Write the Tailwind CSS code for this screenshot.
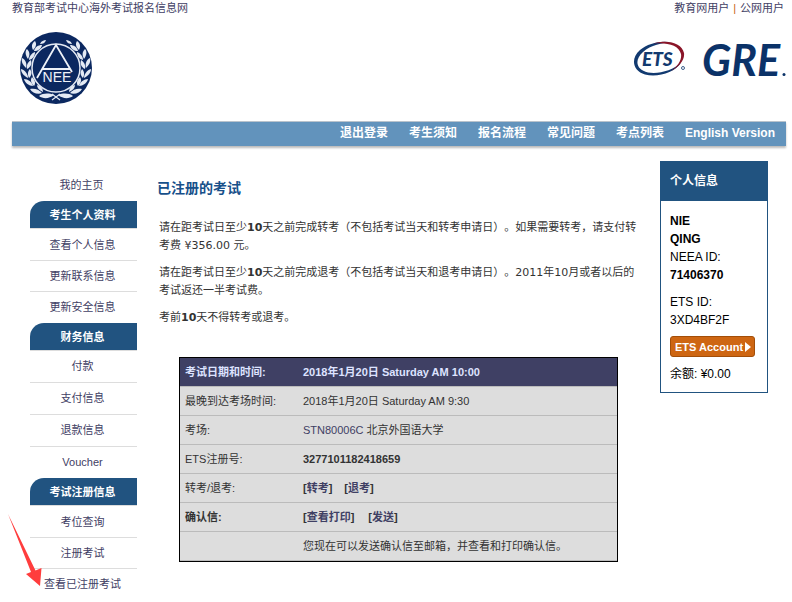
<!DOCTYPE html>
<html lang="zh-CN">
<head>
<meta charset="utf-8">
<meta name="viewport" content="width=device-width, initial-scale=1">
<title>已注册的考试</title>
<script src="https://cdn.jsdelivr.net/npm/@tailwindcss/browser@4"></script>
</head>
<body class="relative bg-white font-['Liberation_Sans','Noto_Sans_CJK_SC',sans-serif] text-[11px] leading-4 text-[#333333]">
<div class="pl-3 pr-1.5">
  <header>
    <div class="flex justify-between pr-0.5 text-[#3f4064]">
      <a href="#">教育部考试中心海外考试报名信息网</a>
      <div class="flex gap-1"><a href="#">教育网用户</a><span class="text-[#c86414]">|</span><a href="#">公网用户</a></div>
    </div>
    <div class="flex items-start justify-between pt-4 pb-[17px] pl-2">
      <svg class="size-[72px]" viewBox="0 0 72 72" role="img" aria-label="NEEA">
        <defs>
          <g id="branch" fill="#e4eaf4">
            <path d="M20 12C21 9 24 8 26 8C25 11 23 12 20 12Z"/>
            <path d="M13 18C11 14 12 11 15 9C17 12 16 15 13 18Z"/>
            <path d="M14 19C15 15 18 13 22 13C21 17 18 19 14 19Z"/>
            <path d="M8 27C5 23 5 19 7 17C10 20 10 23 8 27Z"/>
            <path d="M9 28C9 24 12 21 15 20C15 24 13 27 9 28Z"/>
            <path d="M6 36C3 33 1 30 2 26C6 28 7 32 6 36Z"/>
            <path d="M7 37C6 33 8 30 11 28C12 32 11 35 7 37Z"/>
            <path d="M8 46C4 44 1 41 1 37C5 38 8 42 8 46Z"/>
            <path d="M9 46C7 42 8 39 10 37C12 40 12 43 9 46Z"/>
            <path d="M13 54C9 54 5 51 4 47C8 47 12 50 13 54Z"/>
            <path d="M14 54C11 51 10 48 12 45C15 48 16 51 14 54Z"/>
            <path d="M22 61C18 63 12 61 10 57C14 56 19 57 22 61Z"/>
            <path d="M23 60C19 58 17 56 17 53C21 54 23 57 23 60Z"/>
            <path d="M34 63C29 67 23 67 19 64C23 61 29 61 34 63Z"/>
          </g>
        </defs>
        <circle cx="36" cy="36" r="36" fill="#0b2860"/>
        <use href="#branch"/>
        <use href="#branch" transform="translate(72 0) scale(-1 1)"/>
        <path d="M32 68L40 62M40 68L32 62" stroke="#e4eaf4" stroke-width="1.2"/>
        <circle cx="36" cy="36" r="24" fill="#0b2860" stroke="#e4eaf4" stroke-width="1.5"/>
        <path d="M17 46L36 13L52 40M22.500 37H50.500" fill="none" stroke="#eef2f8" stroke-width="1.8"/>
        <text x="37" y="50" text-anchor="middle" font-family="Liberation Sans" font-size="14" fill="#eef2f8">NEE</text>
      </svg>
      <div class="flex gap-4 pt-2">
        <svg class="h-[38px] w-[54px]" viewBox="0 0 54 38" role="img" aria-label="ETS">
          <path d="M39 2.500C29 0 15 3 7 10C-3 19 0 31 12 34.500C25 38 42 32 48 23C40 30 26 34.500 15 32.500C3 30 1 20 10 12C18 5 29 2.500 39 2.500Z" fill="#123a70"/>
          <path d="M20 3.500C35 -1 49 3 51 13C52 20 46 27 38 31C45 26 49 20 48 14C46 5 34 2 20 3.500Z" fill="#8a1528"/>
          <text x="9" y="26" font-family="Lato" font-weight="900" font-style="italic" font-size="19" fill="#123a70">ETS</text>
          <circle cx="50" cy="28" r="1.500" fill="none" stroke="#123a70" stroke-width=".8"/>
        </svg>
        <svg class="h-[40px] w-[83px]" viewBox="0 0 83 40" role="img" aria-label="GRE">
          <text x="-1" y="36" font-family="Lato" font-weight="700" font-style="italic" font-size="43" fill="#0b3268">GRE</text>
          <circle cx="81" cy="34.500" r="1.500" fill="#0b3268"/>
        </svg>
      </div>
    </div>
    <nav class="flex h-[25px] justify-end gap-[21px] border-t border-[#b9c3cc] bg-[#6293bc] pr-[11px] text-xs leading-[22px] font-bold text-white shadow-[0_2px_2px_#bbbbbb]">
      <a href="#">退出登录</a><a href="#">考生须知</a><a href="#">报名流程</a><a href="#">常见问题</a><a href="#">考点列表</a><a href="#">English Version</a>
    </nav>
  </header>

  <div class="flex items-start px-[18px] pt-[15px]">
    <aside class="w-[107px] shrink-0 pt-2 text-center text-[#3f4064]">
      <a href="#" class="block h-8 pr-1 leading-8">我的主页</a>
      <h2 class="h-7 rounded-tl-[14px] border-b border-[#dddddd] bg-[#215380] pr-0.5 leading-7 font-bold text-white">考生个人资料</h2>
      <ul class="divide-y divide-[#dddddd] py-px leading-[30px] [&>li]:pr-0.5">
        <li><a href="#">查看个人信息</a></li><li><a href="#">更新联系信息</a></li><li><a href="#">更新安全信息</a></li>
      </ul>
      <h2 class="h-7 rounded-tl-[14px] border-b border-[#dddddd] bg-[#215380] pr-0.5 leading-7 font-bold text-white">财务信息</h2>
      <ul class="divide-y divide-[#dddddd] leading-[31px] [&>li]:pr-0.5">
        <li><a href="#">付款</a></li><li><a href="#">支付信息</a></li><li><a href="#">退款信息</a></li><li><a href="#">Voucher</a></li>
      </ul>
      <h2 class="h-7 rounded-tl-[14px] border-b border-[#dddddd] bg-[#215380] pr-0.5 leading-7 font-bold text-white">考试注册信息</h2>
      <ul class="divide-y divide-[#dddddd] pt-px leading-[30px] [&>li]:pr-0.5">
        <li><a href="#">考位查询</a></li><li><a href="#">注册考试</a></li><li><a href="#">查看已注册考试</a></li>
      </ul>
    </aside>

    <main class="min-w-0 flex-1 px-5 pt-4">
      <h1 class="text-sm leading-[22px] font-bold text-[#17508a]">已注册的考试</h1>
      <div class="space-y-[9px] pt-5 pl-0.5 font-['DejaVu_Sans','Noto_Sans_CJK_SC',sans-serif] leading-[18px] [text-spacing-trim:space-all]">
        <p>请在距考试日至少<b>10</b>天之前完成转考（不包括考试当天和转考申请日）。如果需要转考，请支付转考费 ¥356.00 元。</p>
        <p>请在距考试日至少<b>10</b>天之前完成退考（不包括考试当天和退考申请日）。2011年10月或者以后的考试返还一半考试费。</p>
        <p>考前<b>10</b>天不得转考或退考。</p>
      </div>
      <div class="mx-[22px] mt-[30px] border border-black bg-[#dddddd]">
        <table class="w-full border-separate border-spacing-0 text-left [&_a]:text-[#3f4064] [&_td]:h-[29px] [&_td]:border-b [&_td]:border-[#bbbbbb] [&_td]:pl-[5px] [&_th]:h-[29px] [&_th]:border-b [&_th]:border-[#bbbbbb] [&_th]:pl-[5px]">
          <thead><tr class="bg-[#3f4064] text-[#dde3ff]"><th class="w-[118px]">考试日期和时间:</th><th>2018年1月20日 Saturday AM 10:00</th></tr></thead>
          <tbody>
            <tr><td>最晚到达考场时间:</td><td>2018年1月20日 Saturday AM 9:30</td></tr>
            <tr><td>考场:</td><td><a href="#">STN80006C</a> 北京外国语大学</td></tr>
            <tr><td>ETS注册号:</td><td class="font-bold">3277101182418659</td></tr>
            <tr><td>转考/退考:</td><td class="font-bold"><div class="flex gap-3"><span>[<a href="#">转考</a>]</span><span>[<a href="#">退考</a>]</span></div></td></tr>
            <tr><th>确认信:</th><td class="font-bold"><div class="flex gap-3.5"><span>[<a href="#">查看打印</a>]</span><span>[<a href="#">发送</a>]</span></div></td></tr>
            <tr><td></td><td>您现在可以发送确认信至邮箱，并查看和打印确认信。</td></tr>
          </tbody>
        </table>
      </div>
    </main>

    <section class="w-[108px] shrink-0 border border-[#215380] text-xs leading-[18px] text-black">
      <h2 class="h-[39px] bg-[#215380] pl-[9px] leading-[38px] font-bold text-white">个人信息</h2>
      <div class="px-[9px] pt-[11px] pb-[9px]">
        <p class="font-bold">NIE<br>QING</p>
        <p>NEEA ID:</p>
        <p class="font-bold">71406370</p>
        <p class="mt-[9px]">ETS ID:<br>3XD4BF2F</p>
        <button class="mt-[7px] mb-2 flex h-[21px] w-[85px] items-center rounded-[3px] border border-[#a34e08] bg-[#ce6612] pl-1 text-[11px] font-bold whitespace-nowrap text-white">ETS Account<svg class="ml-0.5 h-[10px] w-[6px] shrink-0" viewBox="0 0 6 10" aria-hidden="true"><path d="M0 0L6 5L0 10Z" fill="#fff"/></svg></button>
        <p>余额: ¥0.00</p>
      </div>
    </section>
  </div>
</div>
<svg class="pointer-events-none absolute top-[514px] left-2 h-[73px] w-[34px]" viewBox="0 0 34 73" aria-hidden="true"><path d="M0 0L27.500 56.500L33.500 54L32 72L18 60L23 58Z" fill="#ff3d3d"/></svg>
</body>
</html>
